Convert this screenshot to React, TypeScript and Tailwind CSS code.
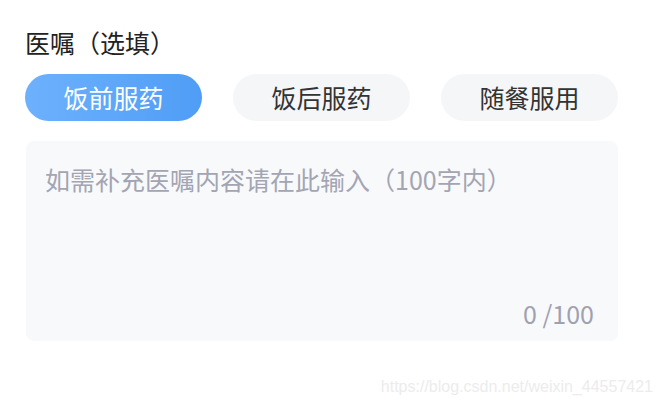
import { useState } from "react"

const OPTIONS = ["饭前服药", "饭后服药", "随餐服用"]

const FONT = { fontFamily: '"Noto Sans CJK SC", "Noto Sans", sans-serif' }

export default function App() {
  const [active, setActive] = useState(0)
  const [text, setText] = useState("")

  return (
    <div className="relative w-[662px] h-[406px] bg-white overflow-hidden" style={FONT}>
      <div className="pl-[25px] pt-[26px] w-[618px]">
        <h3 className="text-[25px] leading-[32px] text-[#222222]">医嘱（选填）</h3>

        <div className="mt-[16px] grid grid-cols-3 gap-[31px]">
          {OPTIONS.map((opt, i) => (
            <button
              key={opt}
              onClick={() => setActive(i)}
              className={`h-[47px] rounded-full text-[25px] leading-none ${
                active === i
                  ? "bg-gradient-to-r from-[#6db1fd] to-[#4f9df6] text-white"
                  : "bg-[#f5f6f8] text-[#333333]"
              }`}
            >
              {opt}
            </button>
          ))}
        </div>

        <div className="mt-[20px] ml-[1px] h-[200px] rounded-[8px] bg-[#f8f9fb] flex flex-col pl-[19px] pr-[24px] pt-[22px] pb-[12px]">
          <textarea
            value={text}
            maxLength={100}
            onChange={(e) => setText(e.target.value)}
            placeholder="如需补充医嘱内容请在此输入（100字内）"
            className="flex-1 resize-none bg-transparent outline-none text-[25px] leading-[32px] text-[#333333] placeholder:text-[#a3a5b3]"
            style={FONT}
          />
          <div className="text-right text-[25px] leading-[32px] text-[#9fa1b1]">{text.length} /100</div>
        </div>
      </div>

      <div
        className="absolute right-[9px] top-[377px] text-[16px] leading-[20px] text-[#ececec]"
        style={{ fontFamily: '"Liberation Sans", Arial, sans-serif' }}
      >
        https://blog.csdn.net/weixin_44557421
      </div>
    </div>
  )
}
